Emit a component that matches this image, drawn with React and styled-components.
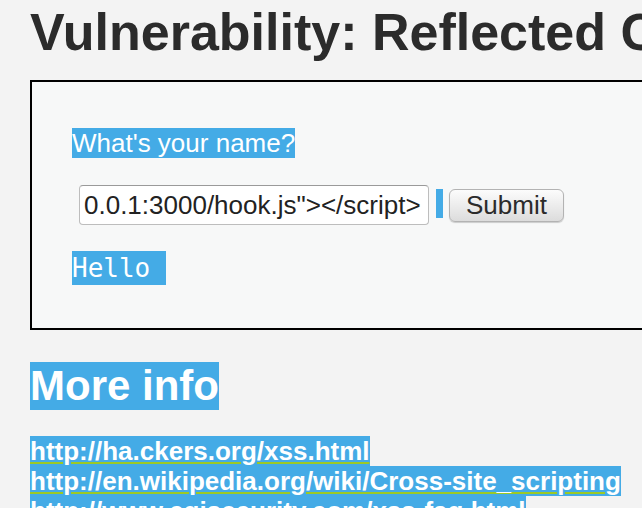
import React from "react";
import styled, { createGlobalStyle } from "styled-components";

const GlobalStyle = createGlobalStyle`
  html, body {
    margin: 0;
    padding: 0;
    overflow: hidden;
    background: #f3f3f3;
  }
  body {
    font-family: "Liberation Sans", Arial, sans-serif;
    color: #2b2b2b;
  }
`;

const SELECT_BLUE = "#44abe6";

const Page = styled.div`
  padding-left: 30px;
  width: 720px;
`;

const Title = styled.h1`
  margin: 2px 0 0;
  font-size: 52px;
  line-height: 60px;
  font-weight: bold;
  white-space: nowrap;
  color: #2b2b2b;
`;

const CodeArea = styled.div`
  margin-top: 18px;
  border: 2px solid #000;
  background: #f7f8f8;
  padding: 46px 40px 43px;
`;

// selected (highlighted) text run
const Mark = styled.span`
  display: block;
  width: fit-content;
  background: ${SELECT_BLUE};
  color: #fff;
  white-space: pre;
  font-size: ${(p) => p.$size || 26}px;
  line-height: ${(p) => p.$line || 30}px;
`;

const FormRow = styled.div`
  display: flex;
  align-items: flex-start;
  margin-top: 27px;
  padding-left: 7px;
`;

const NameInput = styled.input`
  box-sizing: border-box;
  width: 350px;
  height: 40px;
  margin: 0;
  padding: 0 4px;
  border: 1px solid #bdbdbd;
  border-top-color: #9a9a9a;
  border-radius: 4px;
  background: #fff;
  font-family: "Liberation Sans", Arial, sans-serif;
  font-size: 26px;
  color: #222;
  outline: none;
`;

const SpaceMark = styled.span`
  width: 7px;
  height: 29px;
  margin: 4px 6px 0 7px;
  background: ${SELECT_BLUE};
`;

const SubmitButton = styled.button`
  box-sizing: border-box;
  width: 115px;
  height: 33px;
  margin-top: 4px;
  padding: 0;
  border: 1px solid #b3b3b3;
  border-radius: 6px;
  background: linear-gradient(#fcfcfc, #e9e9e9 60%, #dcdcdc);
  box-shadow: 0 1px 1px rgba(0, 0, 0, 0.18);
  font-family: "Liberation Sans", Arial, sans-serif;
  font-size: 26px;
  line-height: 31px;
  color: #2b2b2b;
`;

const Output = styled(Mark)`
  margin-top: 26px;
  font-family: "DejaVu Sans Mono", monospace;
`;

const InfoHeading = styled(Mark)`
  margin-top: 32px;
  font-weight: bold;
`;

const LinkList = styled.div`
  margin-top: 26px;
`;

const InfoLink = styled(Mark).attrs({ as: "a" })`
  font-weight: bold;
  text-decoration: underline;
  text-decoration-color: #9cc925;
  text-decoration-thickness: 2px;
  text-underline-offset: 2px;
`;

const links = [
  "http://ha.ckers.org/xss.html",
  "http://en.wikipedia.org/wiki/Cross-site_scripting",
  "http://www.cgisecurity.com/xss-faq.html",
  "http://www.scriptalert1.com/",
];

export default function App() {
  return (
    <>
      <GlobalStyle />
      <Page>
        <Title>Vulnerability: Reflected Cross Site Scripting (XSS)</Title>
        <CodeArea>
          <Mark>What's your name?</Mark>
          <FormRow>
            <NameInput readOnly defaultValue={'0.0.1:3000/hook.js"></script>'} />
            <SpaceMark />
            <SubmitButton>Submit</SubmitButton>
          </FormRow>
          <Output $line={34}>{"Hello "}</Output>
        </CodeArea>
        <InfoHeading $size={42} $line={48}>More info</InfoHeading>
        <LinkList>
          {links.map((href) => (
            <InfoLink key={href} href={href}>
              {href}
            </InfoLink>
          ))}
        </LinkList>
      </Page>
    </>
  );
}
